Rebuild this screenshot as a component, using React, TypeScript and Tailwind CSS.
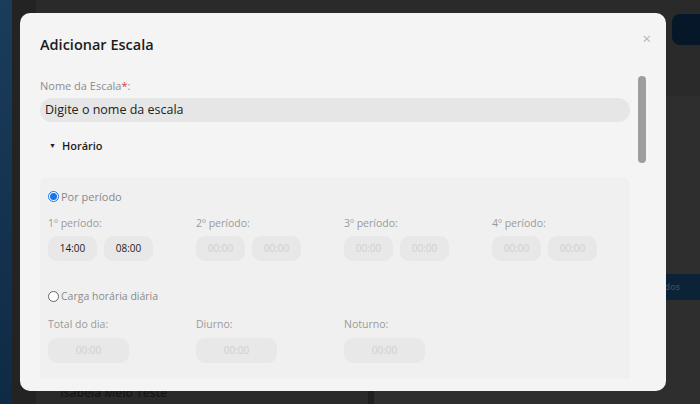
import React from "react";

const periodos = [
  { label: "1º período:", inicio: "14:00", fim: "08:00", filled: true },
  { label: "2º período:", inicio: "00:00", fim: "00:00", filled: false },
  { label: "3º período:", inicio: "00:00", fim: "00:00", filled: false },
  { label: "4º período:", inicio: "00:00", fim: "00:00", filled: false },
];

const cargas = ["Total do dia:", "Diurno:", "Noturno:"];

function TimeBox({ value, filled, wide }: { value: string; filled?: boolean; wide?: boolean }) {
  return (
    <div
      className={`flex h-[25px] items-center justify-center rounded-[9px] bg-[#e8e8e8] text-[10px] ${
        wide ? "w-[81px]" : "w-[49px]"
      } ${filled ? "text-[#222]" : "text-[#cfcfcf]"}`}
    >
      {value}
    </div>
  );
}

function Radio({ checked, label, small }: { checked?: boolean; label: string; small?: boolean }) {
  return (
    <div className={`flex items-center gap-[2px] text-[#8a8a8a] ${small ? "text-[10.5px]" : "text-[11px]"}`}>
      {checked ? (
        <span className="flex h-[11px] w-[11px] items-center justify-center rounded-full border border-[#1a73e8] bg-white">
          <span className="h-[7px] w-[7px] rounded-full bg-[#1a73e8]" />
        </span>
      ) : (
        <span className="h-[11px] w-[11px] rounded-full border border-[#666] bg-white" />
      )}
      <span>{label}</span>
    </div>
  );
}

export default function App() {
  return (
    <div
      className="relative h-[404px] w-[700px] overflow-hidden bg-[#2e2e2e]"
      style={{ fontFamily: '"Open Sans", "Noto Sans", sans-serif' }}
    >
      {/* dimmed page behind the modal */}
      <div className="flex h-full">
        <div className="w-[12px] bg-gradient-to-b from-[#1a3d5c] to-[#0f2a45]" />
        <div className="w-[24px] bg-[#232323]" />
        <div className="flex flex-1 flex-col">
          <div className="flex h-[96px] items-start justify-end bg-[#2a2a2b] pt-[14px]">
            <div className="h-[31px] w-[40px] -mr-[12px] rounded-[8px] bg-[#07172a]" />
          </div>
          <div className="flex flex-1">
            <div className="flex w-[332px] flex-col justify-end bg-[#2a2a2a] pb-[2px] pl-[24px]">
              <span className="text-[12px] font-semibold text-[#151515]">Isabela Melo Teste</span>
            </div>
            <div className="w-[6px] bg-[#202020]" />
            <div className="flex flex-1 flex-col items-end pt-[178px]">
              <div className="flex h-[26px] w-[60px] items-center rounded-l-[9px] bg-[#0c2236] pl-[14px] text-[9px] font-semibold text-[#3a4c5e]">
                Todos
              </div>
            </div>
          </div>
        </div>
      </div>

      {/* modal */}
      <div className="absolute left-[20px] top-[13px] flex h-[378px] w-[646px] flex-col rounded-[10px] bg-[#f4f4f4]">
        <div className="flex items-start justify-between pl-[20px] pr-[15px] pt-[21px]">
          <h2 className="text-[14.5px] font-semibold leading-[22px] text-[#1c1c1c]">Adicionar Escala</h2>
          <span className="-mt-[3px] text-[15px] leading-none text-[#b5b5b5]">×</span>
        </div>

        <div className="mt-[14px] flex min-h-0 flex-1 pl-[20px]">
          <div className="flex w-[590px] flex-col">
            <label className="mt-[8px] text-[11px] leading-[16px] text-[#8c8c8c]">
              Nome da Escala<span className="text-[#e53935]">*</span>:
            </label>
            <div className="mt-[4px] flex h-[24px] items-center rounded-[12px] bg-[#e6e6e6] pl-[5px] text-[12.5px] text-[#222]">
              Digite o nome da escala
            </div>

            <div className="mt-[16px] flex items-center gap-[6px] pl-[9px]">
              <span className="text-[7px] text-[#222]">▼</span>
              <span className="text-[11px] font-semibold text-[#1c1c1c]">Horário</span>
            </div>

            <div className="mt-[22px] flex flex-1 flex-col rounded-t-[8px] bg-[#f0f0f0] pl-[8px] pt-[12px]">
              <Radio checked label="Por período" />
              <div className="mt-[11px] grid grid-cols-[148px_148px_148px_148px]">
                {periodos.map((p) => (
                  <div key={p.label} className="flex flex-col">
                    <span className="text-[10.5px] leading-[14px] text-[#9a9a9a]">{p.label}</span>
                    <div className="mt-[6px] flex gap-[7px]">
                      <TimeBox value={p.inicio} filled={p.filled} />
                      <TimeBox value={p.fim} filled={p.filled} />
                    </div>
                  </div>
                ))}
              </div>

              <div className="mt-[28px]">
                <Radio label="Carga horária diária" small />
              </div>
              <div className="mt-[12px] grid grid-cols-[148px_148px_148px]">
                {cargas.map((c) => (
                  <div key={c} className="flex flex-col">
                    <span className="text-[10.5px] leading-[14px] text-[#9a9a9a]">{c}</span>
                    <div className="mt-[7px]">
                      <TimeBox value="00:00" wide />
                    </div>
                  </div>
                ))}
              </div>
            </div>
          </div>
          <div className="ml-[8px] flex w-[8px] flex-col pt-[6px]">
            <div className="h-[87px] w-[8px] rounded-full bg-[#9e9e9e]" />
          </div>
        </div>
        <div className="h-[12px]" />
      </div>
    </div>
  );
}
